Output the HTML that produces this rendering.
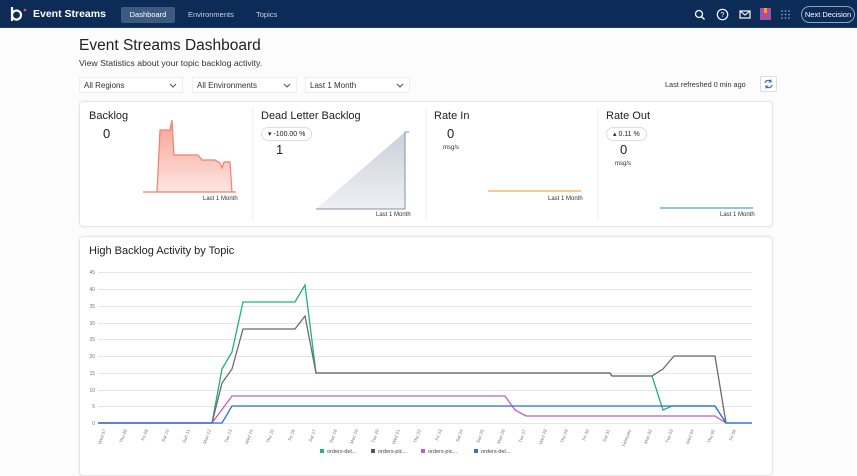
<!DOCTYPE html>
<html><head><meta charset="utf-8"><style>
*{box-sizing:border-box;margin:0;padding:0}
body{width:857px;height:464px;overflow:hidden;background:#fcfcfc;font-family:"Liberation Sans",sans-serif;color:#222;position:relative}
.nav{position:absolute;left:0;top:0;width:857px;height:28px;background:#0c2b57;border-bottom:1px solid #1b3d6e}
.abs{position:absolute;white-space:nowrap}
.dd{position:absolute;top:77px;height:16px;background:#fff;border:1px solid #eee;font-size:8px;color:#333;padding:3px 4px}
.dd svg{position:absolute;right:5px;top:5px}
.panel{position:absolute;background:#fff;border:1px solid #e6e6e6;border-radius:4px;box-shadow:0 0 3px rgba(0,0,0,.06)}
.h{font-size:11px;color:#222}
.small{font-size:6px;color:#333}
.pill{position:absolute;height:14px;border:1px solid #ddd;border-radius:7px;font-size:7px;padding:2px 6px;background:#fff}
</style></head><body>
<div class="nav">
 <svg class="abs" style="left:9px;top:6px" width="20" height="18"><path d="M3 1v14" stroke="#fff" stroke-width="2.2"/><path d="M3 9a4.5 4.5 0 1 1 0 .1" fill="none" stroke="#fff" stroke-width="2.2"/><circle cx="16" cy="4" r="1.3" fill="#f55"/></svg>
 <div class="abs" style="left:33px;top:8px;color:#fff;font-weight:bold;font-size:10.5px">Event Streams</div>
 <div class="abs" style="left:121px;top:7px;width:54px;height:16px;background:#3d5a80;border-radius:2px;color:#fff;font-size:7.5px;text-align:center;line-height:16px">Dashboard</div>
 <div class="abs" style="left:188px;top:10px;color:#c8d2e2;font-size:7.5px">Environments</div>
 <div class="abs" style="left:256px;top:10px;color:#c8d2e2;font-size:7.5px">Topics</div>
 <svg class="abs" style="left:694px;top:9px" width="12" height="12"><circle cx="5" cy="5" r="3.5" fill="none" stroke="#fff" stroke-width="1.3"/><path d="M7.5 7.5l3 3" stroke="#fff" stroke-width="1.4"/></svg>
 <svg class="abs" style="left:716px;top:8px" width="13" height="13"><circle cx="6.5" cy="6.5" r="5.2" fill="none" stroke="#fff" stroke-width="1.2"/><text x="6.5" y="9" font-size="7" fill="#fff" text-anchor="middle" font-family="Liberation Sans">?</text></svg>
 <svg class="abs" style="left:739px;top:10px" width="12" height="10"><rect x="1" y="1" width="10" height="7" fill="none" stroke="#fff" stroke-width="1.2"/><path d="M1 1l5 4 5-4" fill="none" stroke="#fff" stroke-width="1.1"/></svg>
 <svg class="abs" style="left:760px;top:8px" width="11" height="12"><rect width="11" height="12" fill="#3a7bd5"/><path d="M0 0l11 12M11 0L0 12" stroke="#e63b7a" stroke-width="3"/><rect x="4" y="0" width="3" height="5" fill="#f5a623"/></svg>
 <svg class="abs" style="left:781px;top:10px" width="9" height="9" fill="#9fb0c8"><circle cx="1" cy="1" r=".8"/><circle cx="4.5" cy="1" r=".8"/><circle cx="8" cy="1" r=".8"/><circle cx="1" cy="4.5" r=".8"/><circle cx="4.5" cy="4.5" r=".8"/><circle cx="8" cy="4.5" r=".8"/><circle cx="1" cy="8" r=".8"/><circle cx="4.5" cy="8" r=".8"/><circle cx="8" cy="8" r=".8"/></svg>
 <div class="abs" style="left:801px;top:6px;width:54px;height:17px;border:1px solid #8da0bd;border-radius:9px;color:#fff;font-size:7.5px;text-align:center;line-height:15px">Next Decision</div>
</div>
<div class="abs" style="left:79px;top:37px;font-size:15.5px;color:#222">Event Streams Dashboard</div>
<div class="abs" style="left:79px;top:58px;font-size:8.7px;color:#333">View Statistics about your topic backlog activity.</div>
<div class="dd" style="left:79px;width:104px">All Regions<svg width="8" height="5"><path d="M1 1l3 3 3-3" fill="none" stroke="#555"/></svg></div>
<div class="dd" style="left:192px;width:105px">All Environments<svg width="8" height="5"><path d="M1 1l3 3 3-3" fill="none" stroke="#555"/></svg></div>
<div class="dd" style="left:305px;width:105px">Last 1 Month<svg width="8" height="5"><path d="M1 1l3 3 3-3" fill="none" stroke="#555"/></svg></div>
<div class="abs" style="left:665px;top:80px;font-size:7.3px;color:#333">Last refreshed 0 min ago</div>
<div class="abs" style="left:760px;top:76px;width:17px;height:16px;background:#fff;border:1px solid #ddd;border-radius:2px"><svg width="15" height="14"><path d="M4 6a3.5 3.5 0 0 1 6-1.5M11 8a3.5 3.5 0 0 1-6 1.5" fill="none" stroke="#3a6aa8" stroke-width="1.2"/><path d="M10 2.5v2.5h-2.5M5 11.5v-2.5h2.5" fill="none" stroke="#3a6aa8" stroke-width="1.1"/></svg></div>

<div class="panel" style="left:79px;top:101px;width:694px;height:126px"></div>
<svg class="abs" style="left:0;top:0" width="857" height="464">
 <defs><linearGradient id="g1" x1="0" y1="0" x2="0" y2="1"><stop offset="0" stop-color="#f6a092"/><stop offset="1" stop-color="#fde6e1"/></linearGradient>
 <linearGradient id="g2" x1="0" y1="0" x2="0" y2="1"><stop offset="0" stop-color="#c9d0db"/><stop offset="1" stop-color="#eef0f3"/></linearGradient></defs>
 <line x1="253" y1="108" x2="253" y2="220" stroke="#eee"/><line x1="426" y1="108" x2="426" y2="220" stroke="#eee"/><line x1="598" y1="108" x2="598" y2="220" stroke="#eee"/>
 <path d="M143 192H157L160 130H170L172 120L174 155H198L202 160H215L220 163L222 168L224 162H230L232 192H236V192Z" fill="url(#g1)" stroke="#f47f6c" stroke-width="1.2"/>
 <path d="M316 209L405 132V209Z" fill="url(#g2)"/>
 <path d="M316 209H405V132H409" fill="none" stroke="#8090a8" stroke-width="1"/>
 <path d="M488 191H581" stroke="#f0ae4a" stroke-width="1.3"/>
 <path d="M660 208H753" stroke="#4aa5e8" stroke-width="1.3"/>
</svg>
<div class="abs h" style="left:89px;top:110px">Backlog</div>
<div class="abs" style="left:103px;top:126px;font-size:13px">0</div>
<div class="abs small" style="left:203px;top:196px">Last 1 Month</div>
<div class="abs h" style="left:261px;top:110px">Dead Letter Backlog</div>
<div class="pill" style="left:261px;top:127px">▾ -100.00 %</div>
<div class="abs" style="left:276px;top:142px;font-size:13px">1</div>
<div class="abs small" style="left:376px;top:212px">Last 1 Month</div>
<div class="abs h" style="left:434px;top:110px">Rate In</div>
<div class="abs" style="left:447px;top:126px;font-size:13px">0</div>
<div class="abs small" style="left:443px;top:145px">msg/s</div>
<div class="abs small" style="left:548px;top:196px">Last 1 Month</div>
<div class="abs h" style="left:606px;top:110px">Rate Out</div>
<div class="pill" style="left:606px;top:127px">▴ 0.11 %</div>
<div class="abs" style="left:620px;top:142px;font-size:13px">0</div>
<div class="abs small" style="left:615px;top:161px">msg/s</div>
<div class="abs small" style="left:720px;top:212px">Last 1 Month</div>

<div class="panel" style="left:79px;top:236px;width:694px;height:240px"></div>
<div class="abs h" style="left:89px;top:245px">High Backlog Activity by Topic</div>
<svg class="abs" style="left:0;top:0" width="857" height="464" font-family="Liberation Sans">
 <g stroke="#e6e6e6" stroke-width="1">
 <path d="M98 272.5H752M98 289.5H752M98 306.5H752M98 323.5H752M98 339.5H752M98 356.5H752M98 373.5H752M98 390.5H752M98 406.5H752M98 423.5H752"/></g>
 <g font-size="5" fill="#777" text-anchor="end">
 <text x="95" y="274">45</text><text x="95" y="291">40</text><text x="95" y="308">35</text><text x="95" y="325">30</text><text x="95" y="341">25</text><text x="95" y="358">20</text><text x="95" y="375">15</text><text x="95" y="392">10</text><text x="95" y="408">5</text><text x="95" y="425">0</text></g>
 <path d="M98 423H212L222 369L232 352L243 302H295L305 285L316 373H610L612 376H652L663 410L672 406H715L726 423H752" fill="none" stroke="#1db37a" stroke-width="1.3"/>
 <path d="M98 423H212L222 383L232 369L243 329H295L305 316L316 373H610L612 376H652L663 369L674 356H715L726 423" fill="none" stroke="#6b6b6b" stroke-width="1.3"/>
 <path d="M98 423H212L232 396H505L515 410L526 416H715L726 423" fill="none" stroke="#c45cc0" stroke-width="1.3"/>
 <path d="M98 423H222L232 406H715L726 423H752" fill="none" stroke="#2d6fe0" stroke-width="1.3"/>
 <g font-size="4.5" fill="#777" text-anchor="end">
 <text transform="translate(106,430) rotate(-70)">Wed 07</text><text transform="translate(127,430) rotate(-70)">Thu 08</text><text transform="translate(148,430) rotate(-70)">Fri 09</text><text transform="translate(169,430) rotate(-70)">Sat 10</text><text transform="translate(190,430) rotate(-70)">Sun 11</text><text transform="translate(211,430) rotate(-70)">Mon 12</text><text transform="translate(232,430) rotate(-70)">Tue 13</text><text transform="translate(253,430) rotate(-70)">Wed 14</text><text transform="translate(274,430) rotate(-70)">Thu 15</text><text transform="translate(295,430) rotate(-70)">Fri 16</text><text transform="translate(316,430) rotate(-70)">Sat 17</text><text transform="translate(337,430) rotate(-70)">Sun 18</text><text transform="translate(358,430) rotate(-70)">Mon 19</text><text transform="translate(379,430) rotate(-70)">Tue 20</text><text transform="translate(400,430) rotate(-70)">Wed 21</text><text transform="translate(421,430) rotate(-70)">Thu 22</text><text transform="translate(442,430) rotate(-70)">Fri 23</text><text transform="translate(463,430) rotate(-70)">Sat 24</text><text transform="translate(484,430) rotate(-70)">Sun 25</text><text transform="translate(505,430) rotate(-70)">Mon 26</text><text transform="translate(526,430) rotate(-70)">Tue 27</text><text transform="translate(547,430) rotate(-70)">Wed 28</text><text transform="translate(568,430) rotate(-70)">Thu 29</text><text transform="translate(589,430) rotate(-70)">Fri 30</text><text transform="translate(610,430) rotate(-70)">Sat 31</text><text transform="translate(631,430) rotate(-70)">February</text><text transform="translate(652,430) rotate(-70)">Mon 02</text><text transform="translate(673,430) rotate(-70)">Tue 03</text><text transform="translate(694,430) rotate(-70)">Wed 04</text><text transform="translate(715,430) rotate(-70)">Thu 05</text><text transform="translate(736,430) rotate(-70)">Fri 06</text></g>
 <g font-size="5.5" fill="#444">
 <rect x="320" y="449" width="4" height="4" fill="#1db37a"/><text x="327" y="453">orders-del...</text>
 <rect x="371" y="449" width="4" height="4" fill="#555"/><text x="378" y="453">orders-pic...</text>
 <rect x="421" y="449" width="4" height="4" fill="#c45cc0"/><text x="428" y="453">orders-pic...</text>
 <rect x="474" y="449" width="4" height="4" fill="#2d6fe0"/><text x="481" y="453">orders-del...</text></g>
</svg>
</body></html>
